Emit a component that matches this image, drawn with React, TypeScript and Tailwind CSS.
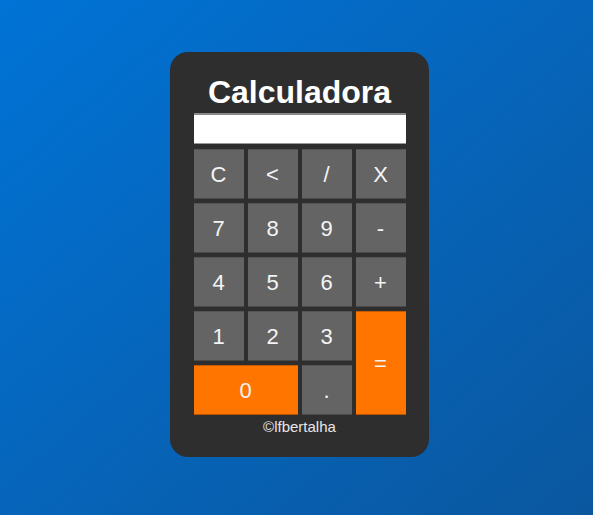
const keys: { label: string; className?: string; orange?: boolean }[] = [
  { label: "C" },
  { label: "<" },
  { label: "/" },
  { label: "X" },
  { label: "7" },
  { label: "8" },
  { label: "9" },
  { label: "-" },
  { label: "4" },
  { label: "5" },
  { label: "6" },
  { label: "+" },
  { label: "1" },
  { label: "2" },
  { label: "3" },
  { label: "=", className: "row-span-2", orange: true },
  { label: "0", className: "col-span-2", orange: true },
  { label: "." },
];

export default function App() {
  return (
    <div
      className="flex h-[515px] w-full items-center justify-center bg-linear-to-br from-[#0073d6] to-[#0a579f] pl-[6px] pb-[6px]"
      style={{ fontFamily: '"Liberation Sans", Arial, sans-serif' }}
    >
      <div className="flex w-[259px] flex-col items-center rounded-[18px] bg-[#2e2e2e] px-[23px] pt-[22px] pb-[21px]">
        <h1 className="text-[32px] leading-[37px] font-bold text-white">Calculadora</h1>
        <input
          type="text"
          readOnly
          className="mt-[2px] h-[31px] w-[212px] border-t-2 border-b border-t-[#8a8a8a] border-b-[#9a9a9a] bg-white outline-none"
        />
        <div className="mt-[5px] grid w-[212px] grid-cols-4 auto-rows-[50px] gap-1">
          {keys.map((k) => (
            <button
              key={k.label}
              className={
                (k.orange
                  ? "border-t border-b border-t-[#c75b00] border-b-[#b65300] bg-[#ff7500] "
                  : "border-t border-b border-t-[#555555] border-b-[#4a4a4a] bg-[#646464] ") +
                "flex items-center justify-center text-[22px] text-[#f4f4f4] " +
                (k.className ?? "")
              }
            >
              {k.label}
            </button>
          ))}
        </div>
        <p className="mt-[3px] text-[15px] leading-[18px] text-[#e6e6e6]">©lfbertalha</p>
      </div>
    </div>
  );
}
